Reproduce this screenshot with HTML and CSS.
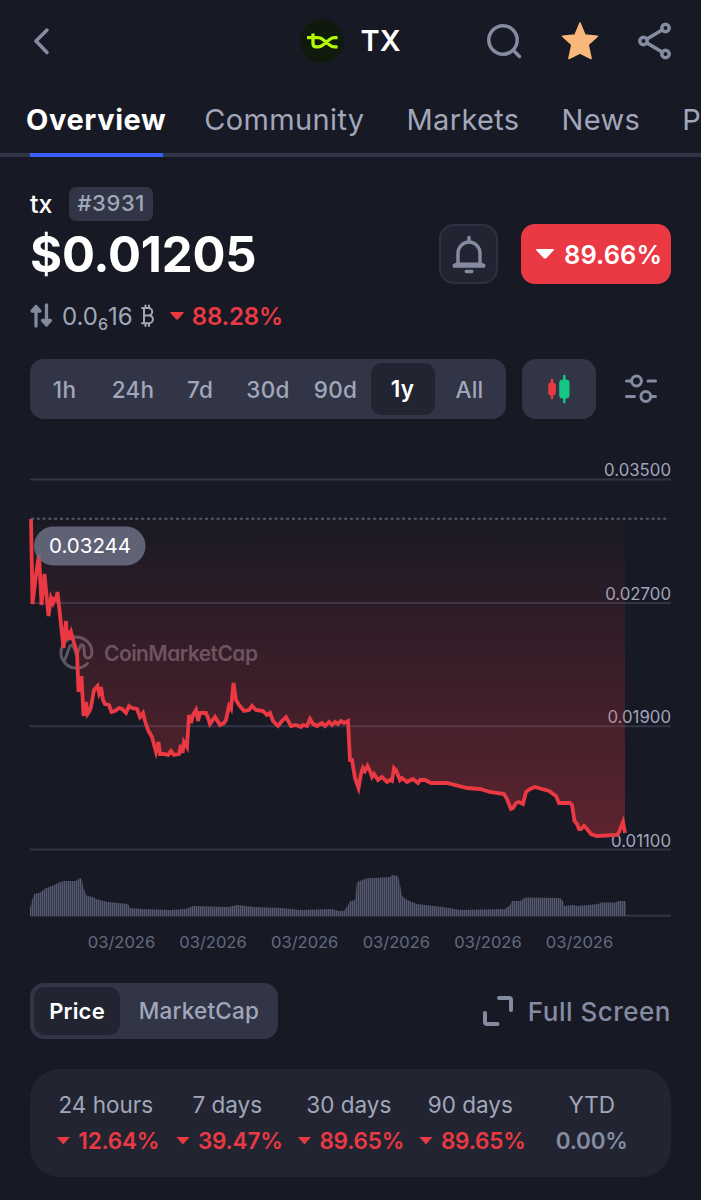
FILE: index.html
```html
<!DOCTYPE html>
<html lang="en">
	<head>
		<meta charset="utf-8">
		<title>TX</title>
		<link rel="stylesheet" href="styles.css">
	</head>
	<body>
		<header class="topbar">
			<svg class="back" width="20" height="30" viewBox="0 0 20 30"><path d="M17 4L6 15l11 11.500"/></svg>
			<div class="coin">
				<svg width="44" height="44" viewBox="0 0 44 44">
					<circle cx="22" cy="22" r="22" fill="#101a0c"/>
					<path d="M7 18.700h11q2.500 0 4.500 1.500l7.500 6q2 1.600 4.500 1.600h3M13 14.500v10q0 3.300 3.300 3.300h1.700q2.500 0 4.500-1.600l7.500-6q2-1.500 4.500-1.500h3" fill="none" stroke="#b1fc03" stroke-width="3.300" stroke-linecap="butt"/>
				</svg>
				<span>TX</span>
			</div>
			<div class="actions">
				<svg width="36" height="36" viewBox="0 0 36 36"><circle cx="17" cy="17" r="14.200"/><path d="M27.500 27.500l6 6"/></svg>
				<svg class="star" width="38" height="40" viewBox="0 0 38 40"><path d="M19 2l5 12 12.500 1.200-9.400 8.500 3 13.800L19 32 7.900 37.500l3-13.800L1.500 15.200 14 14z"/></svg>
				<svg width="36" height="38" viewBox="0 0 36 38"><circle cx="6.500" cy="19" r="3.700"/><circle cx="28.500" cy="6" r="3.700"/><circle cx="28.500" cy="32" r="3.700"/><path d="M10 17l15-9M10 21l15 9"/></svg>
			</div>
		</header>

		<nav class="tabs">
			<a class="tab active">Overview</a>
			<a class="tab">Community</a>
			<a class="tab">Markets</a>
			<a class="tab">News</a>
			<a class="tab">P</a>
		</nav>

		<section class="summary">
			<div class="prices">
				<div class="name">tx <span class="rank">#3931</span></div>
				<div class="price">$0.01205</div>
				<div class="btc">
					<svg class="swap" width="24" height="26" viewBox="0 0 24 26"><path d="M6 23V4M2 8l4-4.500L10 8zM16.500 2v19M12.500 17.500l4 4.500 4-4.500z"/></svg>
					<span class="amount">0.0<small>6</small>16</span>
					<svg class="bitcoin" width="13" height="24" viewBox="0 0 13 24"><path d="M1 4h6.500a3.700 3.700 0 0 1 0 7.400H3M3 4v15.200M1 19.200h7a3.900 3.900 0 0 0 0-7.800M4.500 1.500v2.500M8 1.500v2.500M4.500 19.500v2.500M8 19.500v2.500"/></svg>
					<svg class="caret" width="14" height="8" viewBox="0 0 14 8"><path d="M1 0h12q1.500 0 .4 1.200L8 7.200q-1 .9-2 0L.6 1.200Q-.4 0 1 0z"/></svg>
					<span class="down">88.28%</span>
				</div>
			</div>
			<button class="alert">
				<svg width="36" height="40" viewBox="0 0 36 40"><path d="M18 3.500V7M7 29V19.500a11 11.500 0 0 1 22 0V29"/><path class="rim" d="M2.700 32.800V31L6 29.500H30L33.300 31V32.800z"/><path d="M15.300 37.500h5.400"/></svg>
			</button>
			<div class="change">
				<svg width="18" height="10" viewBox="0 0 18 10"><path d="M1 0h16q1.500 0 .5 1.500L10.500 9q-1.500 1.200-3 0L.5 1.500Q-.5 0 1 0z"/></svg>
				<span>89.66%</span>
			</div>
		</section>

		<section class="controls">
			<div class="ranges">
				<span>1h</span><span>24h</span><span>7d</span><span>30d</span><span>90d</span><span class="on">1y</span><span>All</span>
			</div>
			<div class="candles">
				<svg width="24" height="30" viewBox="0 0 24 30">
					<path d="M5 6v18" stroke="#ea3943" stroke-width="2.500" stroke-linecap="round"/><rect x="1.200" y="8.500" width="7.600" height="13" rx="3" fill="#ea3943"/>
					<path d="M17.300 2v26" stroke="#16c784" stroke-width="2.500" stroke-linecap="round"/><rect x="12.200" y="5.500" width="10.300" height="19" rx="3.500" fill="#16c784"/>
				</svg>
			</div>
			<svg class="sliders" width="34" height="32" viewBox="0 0 34 32"><circle cx="12.500" cy="8" r="4.900"/><circle cx="21.800" cy="23.500" r="4.900"/><path d="M2.500 8h5M24 8h7.500M2.500 23.500h8M27 23.500h4.500"/></svg>
		</section>

		<svg class="chart" width="701" height="520" viewBox="0 440 701 520">
			<defs>
				<linearGradient id="fade" gradientUnits="userSpaceOnUse" x1="0" y1="519" x2="0" y2="835">
					<stop offset="0" stop-color="#ea3943" stop-opacity="0.010"/>
					<stop offset="1" stop-color="#ea3943" stop-opacity="0.330"/>
				</linearGradient>
				<pattern id="bars" patternUnits="userSpaceOnUse" width="2" height="10">
					<rect width="2" height="10" fill="#35374a"/>
					<rect width="1" height="10" fill="#565a6f"/>
				</pattern>
			</defs>
			<g class="grid">
				<path d="M30 479.500H671M30 603H671M30 726.300H671M30 849.500H671M30 915.700H671"/>
				<path class="dotted" d="M31 518.700H669"/>
			</g>
			<g class="axis-y">
				<text x="671" y="476">0.03500</text>
				<text x="671" y="599.500">0.02700</text>
				<text x="671" y="723">0.01900</text>
				<text x="671" y="846.500">0.01100</text>
			</g>
			<g class="watermark">
				<path d="M87.500 663.500a15.500 15.500 0 1 1 4.500-11c0 6-6.500 7.500-7.500 2.500l-.5-7c0-4-3-4-4-1l-3.500 8-3-8c-1-2.500-3-2-4 0L64.500 661"/>
				<text x="104" y="661" textLength="154">CoinMarketCap</text>
			</g>
			<path fill="url(#fade)" d="M31 519L32.500 604 36 575 39 554 41.500 605 44.500 574 48.500 616 51 598 53 603 57.500 592 60 615 63.500 648 66 621 68 640 71 632 76 648 78.500 692 81.500 676 83.500 716 86 702 87.500 714 91 707 95 690 97.500 686 99 693 101 687 103 700 109 705 111.500 712 119 708 126 713 129 706 137 709 140 717 143 713 148 730 152 737 156 752 158.500 742 160 754 168 755 171 751 174 755 179 754 181 745 182.500 753 184 742 187 747 189 715 191 723 196 710 198 721 200 713 206 713 210 724 215 717 220 725 226 720 230 705 231 709 233.500 683 236 700 239 708 244 711 252 706 256 710 263 711 267 715 270 713 275 724 278 726 286 717 291 726 301 726 306 725 310 718 313 724 347 721 350 760 352 760 358.500 789 361 774 363 768 365 771 367.500 766 370 771 372 777 374 774 378 780 382 777 387 782 392 781 394 768 396 770 400 780 402 778 407 782 413 779 418 783 420 780 431 783 447 783 467 788 480 790 490 794 504 793 511 809 513 808 516 803 523 804 526 792 530 789 535 787 549 792 556 796 559 803 570 803 572 805 574.500 821 579 829 584 826 591 834 617 835 623 822 625 833V519z"/>
			<path class="line" d="M31 519L32.500 604 36 575 39 554 41.500 605 44.500 574 48.500 616 51 598 53 603 54.500 599 56 600 57.500 592 60 615 63.500 648 66 621 67 640 68 633 69.500 636 71 632 74 643 77 652 78.500 692 81.500 676 83.500 716 86 702 87.500 714 89 712 91 707 94 690 97.500 686 99 693 101 687 103 700 105 704 109 705 111.500 712 115 711 119 708 122 709 126 713 129 706 132 708 137 709 140 717 143 713 145 721 148 730 152 737 156 752 158.500 742 160 754 164 754 168 755 171 751 174 755 179 754 181 745 182.500 753 184 742 187 747 189 715 191 723 193 715 196 710 198 721 200 713 206 713 208 718 210 724 215 717 220 725 224 723 226 720 229 706 231 709 233.500 683 236 700 239 705 244 711 249 710 252 706 256 710 263 711 267 715 270 713 273 721 278 726 282 721 286 717 291 726 296 725 301 727 303 725 307 726 310 719 313 724 317 726 322 723 325 726 329 722 332 725 335 722 338 724 341 721 344 723 348 721 350 760 352 760 355 778 358.500 788 361 774 363 768 365 771 367.500 766 370 771 372 777 374 774 378 780 382 777 387 782 390 780 392 781 394 768 396 770 400 780 402 778 407 782 413 779 418 783 420 780 425 780 431 783 447 783 467 788 480 789 490 792 504 794 507 799 511 809 513 808 516 803 519 802 523 804 526 792 530 789 535 787 549 791 556 796 559 803 570 803 572 805 574.500 821 577 824 579 829 581 829 584 826 587 829 591 834 597 836 617 835 619 832 623 822 625 833"/>
			<path fill="url(#bars)" d="M30 916V908L32 901 34 894 40 892.500 46 888 52 886 58 883 64 881 76 881 80 878 82 880 83 886 85 892 87 896 93 897 96 899 108 902 128 904 130 908 142 909 170 910 185 909 193 906 228 907 237 905 254 907 282 908 300 910 332 909 339 911 344 911 348 905 350 901 355 900 357 882 366 878.500 390 877 392 875 398 876 400 885 402 896 407 900 417 904 443 907 460 910 505 909 510 905 512 901 520 901 525 897.500 560 898 563 901 564 906 573 905 578 906 598 904 601 902.500 616 902.500 618 901 626 901V916z"/>
			<rect x="34" y="526.500" width="111.500" height="39" rx="19.500" fill="#6b6f84" fill-opacity="0.850"/>
			<text class="high" x="49" y="553">0.03244</text>
			<g class="axis-x">
				<text x="121.500" y="948">03/2026</text>
				<text x="213" y="948">03/2026</text>
				<text x="304.700" y="948">03/2026</text>
				<text x="396.300" y="948">03/2026</text>
				<text x="488" y="948">03/2026</text>
				<text x="579.500" y="948">03/2026</text>
			</g>
		</svg>

		<section class="chart-footer">
			<div class="toggle"><span class="on">Price</span><span>MarketCap</span></div>
			<div class="fullscreen">
				<svg width="32" height="32" viewBox="0 0 32 32"><path d="M17 3h10q2 0 2 2v10M3 18v9q0 2 2 2h10.500"/></svg>
				Full Screen
			</div>
		</section>

		<section class="stats">
			<div><p>24 hours</p><b><i></i>12.64%</b></div>
			<div><p>7 days</p><b><i></i>39.47%</b></div>
			<div><p>30 days</p><b><i></i>89.65%</b></div>
			<div><p>90 days</p><b><i></i>89.65%</b></div>
			<div><p>YTD</p><b class="flat">0.00%</b></div>
		</section>
	</body>
</html>
```
FILE: styles.css
```css
*
{
	box-sizing: border-box;
}
body
{
	margin: 0;
	width: 701px;
	height: 1200px;
	overflow: hidden;
	background: #171924;
	color: #ffffff;
	font-family: Inter, sans-serif;
}
svg
{
	display: block;
	flex: none;
	fill: none;
	stroke-linecap: round;
	stroke-linejoin: round;
}

.topbar
{
	display: grid;
	grid-template-columns: 1fr auto 1fr;
	align-items: center;
	height: 83px;
	padding: 0 28px 2px 30px;
}
.back
{
	stroke: #858ca2;
	stroke-width: 3.5px;
}
.coin
{
	display: flex;
	align-items: center;
	gap: 16px;
	margin-right: 2px;
	font-size: 29px;
	font-weight: 600;
}
.actions
{
	display: flex;
	align-items: center;
	justify-content: flex-end;
	gap: 38.5px;
	stroke: #858ca2;
	stroke-width: 3.5px;
}
.star
{
	fill: #f9b87b;
	stroke: #f9b87b;
	stroke-width: 1.5px;
}

.tabs
{
	display: flex;
	height: 74px;
	padding: 18px 0 0 26px;
	border-bottom: 4px solid #323546;
	white-space: nowrap;
}
.tab
{
	flex: none;
	height: 56px;
	margin-right: 42px;
	font-size: 29px;
	line-height: 38px;
	color: #a1a7bb;
	letter-spacing: 0.35px;
}
.tab:last-child
{
	width: 19px;
	margin-right: 0;
}
.tab.active
{
	margin-right: 38px;
	color: #ffffff;
	font-weight: 700;
	letter-spacing: 0.6px;
	background: linear-gradient(#3861fb, #3861fb) 4px 100% / 133px 4px no-repeat;
}

.summary
{
	display: flex;
	height: 202px;
	padding: 30px 30px 0;
}
.prices
{
	flex: 1;
}
.name
{
	display: flex;
	align-items: center;
	gap: 17px;
	height: 34px;
	font-size: 25px;
	font-weight: 500;
}
.rank
{
	height: 34px;
	padding: 0 8px;
	border-radius: 7px;
	background: #323546;
	color: #a1a7bb;
	font-size: 22px;
	line-height: 33px;
	letter-spacing: 0.6px;
}
.price
{
	height: 68px;
	font-size: 49px;
	font-weight: 700;
	line-height: 67px;
	letter-spacing: -0.2px;
}
.btc
{
	display: flex;
	align-items: center;
	height: 56px;
	padding-bottom: 2px;
	font-size: 24px;
	color: #a1a7bb;
}
.swap
{
	margin-right: 8px;
	stroke: #808a9d;
	stroke-width: 3.3px;
}
.swap path
{
	fill: #808a9d;
}
.btc small
{
	position: relative;
	top: 5px;
	font-size: 16px;
	font-weight: 500;
}
.bitcoin
{
	margin: 0 16px 0 8px;
	stroke: #a1a7bb;
	stroke-width: 2px;
}
.caret
{
	margin-right: 8px;
	fill: #ea3943;
}
.down
{
	color: #ea3943;
	font-weight: 600;
	letter-spacing: -0.2px;
}
.alert
{
	display: grid;
	place-items: center;
	width: 59px;
	height: 60px;
	margin: 37px 23px 0 0;
	padding: 0;
	border: 2px solid #2e3141;
	border-radius: 15px;
	background: #222531;
	stroke: #858ca2;
	stroke-width: 3.4px;
}
.rim
{
	fill: #858ca2;
	stroke-width: 2px;
}
.change
{
	display: flex;
	align-items: center;
	gap: 10px;
	width: 150px;
	height: 60px;
	margin-top: 37px;
	padding-left: 15px;
	border-radius: 14px;
	background: #ea3943;
	font-size: 25.5px;
	font-weight: 600;
	letter-spacing: 0.1px;
}
.change path
{
	fill: #ffffff;
}

.controls
{
	display: flex;
	align-items: center;
	height: 60px;
	padding: 0 30px;
}
.ranges
{
	display: grid;
	grid-template-columns: 69px 68px 66px 70px 65px 69px 65px;
	place-items: center;
	width: 476px;
	height: 60px;
	border-radius: 14px;
	background: #323546;
	color: #a1a7bb;
	font-size: 22.5px;
	font-weight: 500;
	line-height: 29px;
	letter-spacing: 0.3px;
}
.on
{
	background: #222531;
	color: #ffffff;
}
.ranges .on
{
	width: 64px;
	height: 52px;
	border-radius: 11px;
	font-weight: 600;
	line-height: 52px;
	text-align: center;
}
.candles
{
	display: grid;
	place-items: center;
	width: 74px;
	height: 60px;
	margin: 0 28px 0 16px;
	border-radius: 14px;
	background: #323546;
}
.sliders
{
	stroke: #858ca2;
	stroke-width: 3px;
}

.chart
{
	margin-top: 21px;
}
.grid
{
	stroke: #323546;
	stroke-width: 2px;
	stroke-linecap: butt;
}
.dotted
{
	stroke: #565a6b;
	stroke-dasharray: 3 2.8;
}
.line
{
	stroke: #ea3943;
	stroke-width: 3.8px;
	stroke-linejoin: miter;
	stroke-linecap: butt;
}
.axis-y
{
	fill: #a1a7bb;
	font-size: 16.8px;
	text-anchor: end;
}
.axis-x
{
	fill: #646b80;
	font-size: 16.5px;
	text-anchor: middle;
}
.high
{
	fill: #ffffff;
	font-size: 20.5px;
}
.watermark
{
	stroke: #5a5763;
	stroke-width: 3px;
}
.watermark text
{
	fill: #5a5763;
	stroke: none;
	font-size: 21px;
	font-weight: 600;
	font-feature-settings: "cv11";
}

.chart-footer
{
	display: flex;
	align-items: center;
	justify-content: space-between;
	height: 56px;
	margin: 23px 30px 0;
}
.toggle
{
	display: flex;
	width: 248px;
	height: 56px;
	padding: 4px;
	border-radius: 14px;
	background: #323546;
	color: #a1a7bb;
	font-size: 22.5px;
	font-weight: 500;
	line-height: 48px;
	letter-spacing: 0.2px;
}
.toggle span
{
	width: 154px;
	padding-left: 4px;
	text-align: center;
}
.toggle .on
{
	width: 86px;
	padding: 0;
	border-radius: 11px;
	font-size: 22px;
	font-weight: 600;
}
.fullscreen
{
	display: flex;
	align-items: center;
	gap: 14px;
	color: #858ca2;
	font-size: 26px;
	font-weight: 500;
	letter-spacing: 0.5px;
	stroke-width: 4px;
}
.fullscreen path
{
	stroke: #858ca2;
}

.stats
{
	display: grid;
	grid-template-columns: repeat(5, 121.500px);
	height: 108px;
	margin: 30px 30px 0;
	padding: 18px 0 0 15px;
	border-radius: 30px;
	background: #222531;
	text-align: center;
}
.stats p
{
	margin: 0;
	color: #a1a7bb;
	font-size: 22.5px;
	line-height: 36px;
}
.stats b
{
	display: flex;
	align-items: center;
	justify-content: center;
	gap: 8px;
	padding-left: 4px;
	color: #ea3943;
	font-size: 22.5px;
	font-weight: 600;
	line-height: 35px;
	letter-spacing: -0.2px;
}
.stats i
{
	width: 14px;
	height: 8px;
	background: #ea3943;
	clip-path: polygon(0 0, 100% 0, 50% 100%);
}
.stats .flat
{
	padding-left: 0;
	color: #858ca2;
}
```
